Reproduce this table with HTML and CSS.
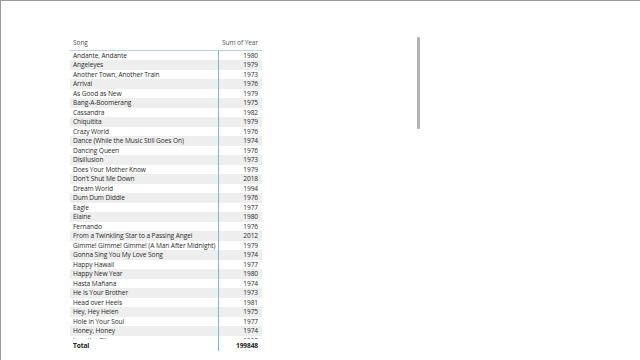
FILE: index.html
```html
<!DOCTYPE html>
<html>
<head>
<meta charset="utf-8">
<link rel="stylesheet" href="styles.css">
</head>
<body>
<div class="frame">
  <div class="visual">
    <div class="table">
      <div class="head">
        <div class="c1">Song</div>
        <div class="c2">Sum of Year</div>
      </div>
      <div class="body">
        <div class="row"><div class="c1">Andante, Andante</div><div class="c2">1980</div></div>
        <div class="row"><div class="c1">Angeleyes</div><div class="c2">1979</div></div>
        <div class="row"><div class="c1">Another Town, Another Train</div><div class="c2">1973</div></div>
        <div class="row"><div class="c1">Arrival</div><div class="c2">1976</div></div>
        <div class="row"><div class="c1">As Good as New</div><div class="c2">1979</div></div>
        <div class="row"><div class="c1">Bang-A-Boomerang</div><div class="c2">1975</div></div>
        <div class="row"><div class="c1">Cassandra</div><div class="c2">1982</div></div>
        <div class="row"><div class="c1">Chiquitita</div><div class="c2">1979</div></div>
        <div class="row"><div class="c1">Crazy World</div><div class="c2">1976</div></div>
        <div class="row"><div class="c1">Dance (While the Music Still Goes On)</div><div class="c2">1974</div></div>
        <div class="row"><div class="c1">Dancing Queen</div><div class="c2">1976</div></div>
        <div class="row"><div class="c1">Disillusion</div><div class="c2">1973</div></div>
        <div class="row"><div class="c1">Does Your Mother Know</div><div class="c2">1979</div></div>
        <div class="row"><div class="c1">Don't Shut Me Down</div><div class="c2">2018</div></div>
        <div class="row"><div class="c1">Dream World</div><div class="c2">1994</div></div>
        <div class="row"><div class="c1">Dum Dum Diddle</div><div class="c2">1976</div></div>
        <div class="row"><div class="c1">Eagle</div><div class="c2">1977</div></div>
        <div class="row"><div class="c1">Elaine</div><div class="c2">1980</div></div>
        <div class="row"><div class="c1">Fernando</div><div class="c2">1976</div></div>
        <div class="row"><div class="c1">From a Twinkling Star to a Passing Angel</div><div class="c2">2012</div></div>
        <div class="row"><div class="c1">Gimme! Gimme! Gimme! (A Man After Midnight)</div><div class="c2">1979</div></div>
        <div class="row"><div class="c1">Gonna Sing You My Love Song</div><div class="c2">1974</div></div>
        <div class="row"><div class="c1">Happy Hawaii</div><div class="c2">1977</div></div>
        <div class="row"><div class="c1">Happy New Year</div><div class="c2">1980</div></div>
        <div class="row"><div class="c1">Hasta Mañana</div><div class="c2">1974</div></div>
        <div class="row"><div class="c1">He Is Your Brother</div><div class="c2">1973</div></div>
        <div class="row"><div class="c1">Head over Heels</div><div class="c2">1981</div></div>
        <div class="row"><div class="c1">Hey, Hey Helen</div><div class="c2">1975</div></div>
        <div class="row"><div class="c1">Hole in Your Soul</div><div class="c2">1977</div></div>
        <div class="row"><div class="c1">Honey, Honey</div><div class="c2">1974</div></div>
        <div class="row"><div class="c1">I am the City</div><div class="c2">1993</div></div>
      </div>
      <div class="total">
        <div class="c1">Total</div>
        <div class="c2">199848</div>
      </div>
    </div>
    <div class="scroll"></div>
  </div>
</div>
</body>
</html>
```
FILE: styles.css
```css
html, body {
  margin: 0;
  padding: 0;
  background: #ffffff;
}
body {
  width: 640px;
  height: 360px;
  overflow: hidden;
  font-family: "Open Sans", "Noto Sans", sans-serif;
  font-size: 6.6px;
  letter-spacing: -0.1px;
  color: #2b2b2b;
}
.frame {
  box-sizing: border-box;
  width: 640px;
  height: 360px;
  border-top: 1px solid #9b9b9b;
  border-left: 1px solid #9b9b9b;
}
.visual {
  display: flex;
  padding-top: 34px;
  padding-left: 69px;
}
.table {
  width: 192px;
  display: flex;
  flex-direction: column;
}
.head {
  display: flex;
  height: 15.5px;
  align-items: flex-end;
  box-sizing: border-box;
  padding-bottom: 3px;
  border-bottom: 1px solid #b7d3ea;
  color: #555555;
}
.c1 {
  flex: 0 0 149px;
  box-sizing: border-box;
  padding-left: 3px;
  white-space: nowrap;
  overflow: hidden;
  border-right: 1px solid #7fb3e0;
  height: 100%;
  display: flex;
  align-items: center;
}
.head .c1 {
  border-right: none;
  align-items: flex-end;
}
.c2 {
  flex: 1;
  text-align: right;
  padding-right: 4px;
  white-space: nowrap;
  display: flex;
  align-items: center;
  justify-content: flex-end;
  height: 100%;
}
.head .c2 {
  align-items: flex-end;
}
.body {
  height: 288px;
  overflow: hidden;
}
.row {
  display: flex;
  height: 9.5px;
  line-height: 9.5px;
}
.row:nth-child(even) {
  background: #eeeeee;
}
.total {
  display: flex;
  height: 12px;
  font-weight: bold;
  color: #222222;
}
.total .c2, .total .c1 {
  padding-top: 1px;
}
.scroll {
  margin-left: 155px;
  margin-top: 2px;
  width: 3px;
  height: 92px;
  background: #b3b3b3;
  border-radius: 1px;
}
```
